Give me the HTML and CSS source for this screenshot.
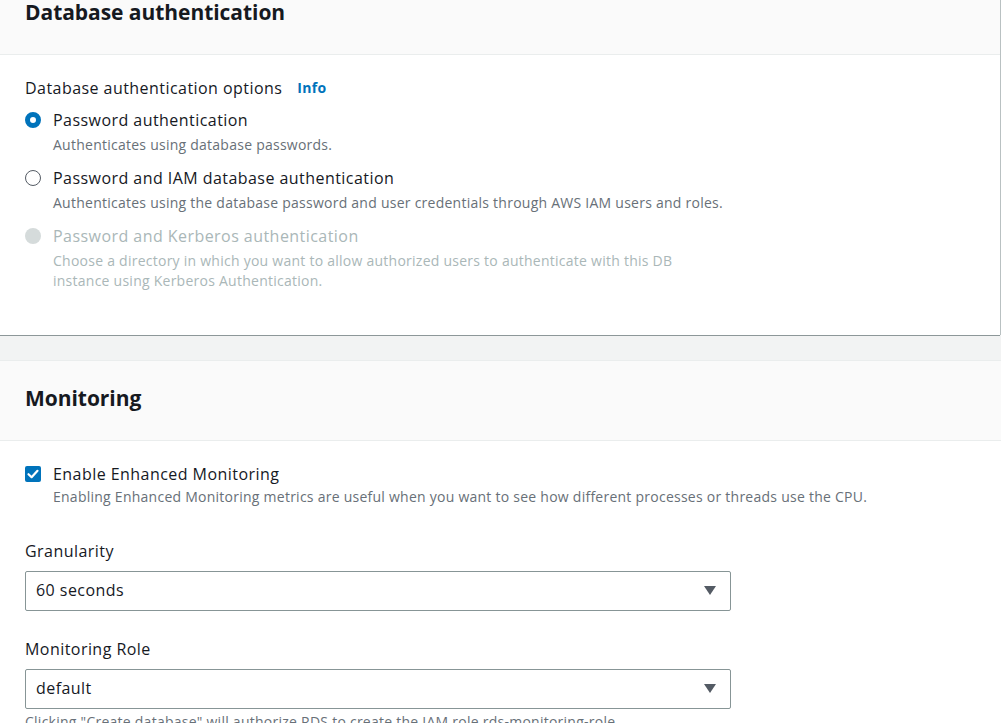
FILE: index.html
```html
<!DOCTYPE html>
<html lang="en">
<head>
<meta charset="utf-8">
<title>Database authentication</title>
<link rel="stylesheet" href="styles.css">
</head>
<body>
<div class="page">
  <section class="card card-auth">
    <header class="card-header"><h2>Database authentication</h2></header>
    <div class="card-body auth-body">
      <div class="field-label">Database authentication options <a class="info" href="#">Info</a></div>
      <div class="radio-group">
        <div class="radio-row">
          <span class="radio checked"></span>
          <div class="radio-text">
            <div class="opt-label">Password authentication</div>
            <div class="opt-desc">Authenticates using database passwords.</div>
          </div>
        </div>
        <div class="radio-row">
          <span class="radio"></span>
          <div class="radio-text">
            <div class="opt-label">Password and IAM database authentication</div>
            <div class="opt-desc">Authenticates using the database password and user credentials through AWS IAM users and roles.</div>
          </div>
        </div>
        <div class="radio-row disabled">
          <span class="radio"></span>
          <div class="radio-text">
            <div class="opt-label">Password and Kerberos authentication</div>
            <div class="opt-desc narrow">Choose a directory in which you want to allow authorized users to authenticate with this DB instance using Kerberos Authentication.</div>
          </div>
        </div>
      </div>
    </div>
  </section>

  <section class="card card-mon">
    <header class="card-header"><h2>Monitoring</h2></header>
    <div class="card-body mon-body">
      <div class="check-row">
        <span class="checkbox">
          <svg viewBox="0 0 16 16" width="16" height="16"><path d="M3.5 8.2 L6.6 11.2 L12.5 4.8" fill="none" stroke="#fff" stroke-width="2.2" stroke-linecap="round" stroke-linejoin="round"/></svg>
        </span>
        <div class="radio-text">
          <div class="opt-label">Enable Enhanced Monitoring</div>
          <div class="opt-desc check-desc">Enabling Enhanced Monitoring metrics are useful when you want to see how different processes or threads use the CPU.</div>
        </div>
      </div>

      <div class="form-field first">
        <div class="field-label">Granularity</div>
        <div class="select"><span>60 seconds</span><span class="caret"></span></div>
      </div>

      <div class="form-field">
        <div class="field-label">Monitoring Role</div>
        <div class="select"><span>default</span><span class="caret"></span></div>
        <div class="hint">Clicking "Create database" will authorize RDS to create the IAM role rds-monitoring-role.</div>
      </div>
    </div>
  </section>
</div>
</body>
</html>
```

FILE: styles.css
```css
* { box-sizing: border-box; }

html, body {
  margin: 0;
  padding: 0;
  background: #f2f3f3;
  font-family: "Open Sans", "Noto Sans", "Liberation Sans", sans-serif;
  color: #16191f;
  overflow: hidden;
}

.page {
  margin-top: -26px;
}

.card {
  background: #ffffff;
  width: 1000px;
  box-shadow: 0 1px 0 0 #8d9799, 1px 0 0 0 #b9c1c2;
}

.card-mon {
  margin-top: 25px;
  width: 1001px;
  box-shadow: none;
}

.card-header {
  background: #fafafa;
  border-top: 1px solid #eaeded;
  border-bottom: 1px solid #eaeded;
  padding: 22px 25px 27px;
}

.card-header h2 {
  margin: 0;
  font-size: 21px;
  line-height: 30px;
  font-weight: 700;
  letter-spacing: -0.05px;
}

.card-body {
  padding: 22px 25px 44px;
}

.field-label {
  font-size: 16px;
  line-height: 22px;
  letter-spacing: 0.45px;
  display: flex;
  align-items: center;
}

.info {
  margin-left: 15px;
  font-size: 14px;
  font-weight: 700;
  letter-spacing: 0.3px;
  color: #0073bb;
  text-decoration: none;
}

.radio-group {
  margin-top: 10px;
  display: flex;
  flex-direction: column;
  gap: 12px;
}

.radio-row, .check-row {
  display: flex;
  align-items: flex-start;
  gap: 12px;
}

.radio {
  flex: none;
  width: 16px;
  height: 16px;
  margin-top: 3px;
  border-radius: 50%;
  border: 1.5px solid #545b64;
  background: #fff;
}

.radio.checked {
  border: 5px solid #0073bb;
}

.disabled .radio {
  border: none;
  background: #d5dbdb;
}

.opt-label {
  font-size: 16px;
  line-height: 22px;
  letter-spacing: 0.45px;
}

.opt-desc {
  margin-top: 4px;
  font-size: 14px;
  line-height: 20px;
  letter-spacing: 0.25px;
  color: #687078;
}

.opt-desc.narrow {
  max-width: 660px;
}

.disabled .opt-label,
.disabled .opt-desc {
  color: #aab7b8;
}

.checkbox {
  flex: none;
  width: 16px;
  height: 16px;
  margin-top: 3px;
  border-radius: 2px;
  background: #0073bb;
  display: flex;
}

.check-desc {
  margin-top: 2px;
}

.form-field {
  margin-top: 27px;
}

.form-field.first {
  margin-top: 33px;
}

.select {
  margin-top: 9px;
  width: 706px;
  height: 40px;
  border: 1px solid #879596;
  border-radius: 2px;
  display: flex;
  align-items: center;
  justify-content: space-between;
  padding: 0 14px 2px 10px;
  font-size: 16px;
  letter-spacing: 0.45px;
}

.caret {
  width: 0;
  height: 0;
  border-left: 6.5px solid transparent;
  border-right: 6.5px solid transparent;
  border-top: 9px solid #545b64;
}

.hint {
  margin-top: 3px;
  font-size: 14px;
  line-height: 20px;
  letter-spacing: 0.25px;
  color: #687078;
}
```
